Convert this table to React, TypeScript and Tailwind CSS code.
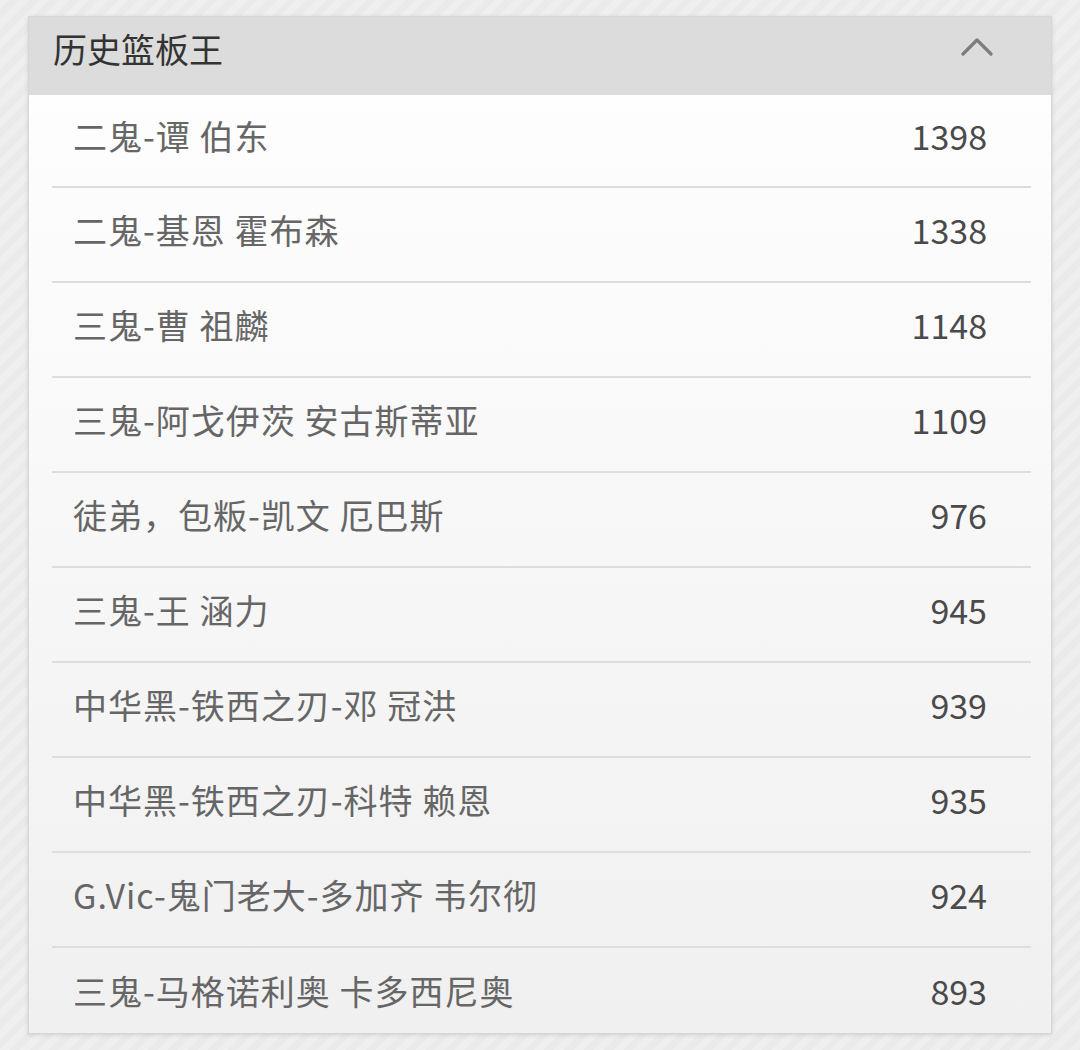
const rows = [
  { name: '二鬼-谭 伯东', value: 1398 },
  { name: '二鬼-基恩 霍布森', value: 1338 },
  { name: '三鬼-曹 祖麟', value: 1148 },
  { name: '三鬼-阿戈伊茨 安古斯蒂亚', value: 1109 },
  { name: '徒弟，包粄-凯文 厄巴斯', value: 976 },
  { name: '三鬼-王 涵力', value: 945 },
  { name: '中华黑-铁西之刃-邓 冠洪', value: 939 },
  { name: '中华黑-铁西之刃-科特 赖恩', value: 935 },
  { name: 'G.Vic-鬼门老大-多加齐 韦尔彻', value: 924 },
  { name: '三鬼-马格诺利奥 卡多西尼奥', value: 893 },
]

export default function App() {
  return (
    <div
      className="min-h-screen w-[1080px] h-[1050px] overflow-hidden pt-[16px] pl-[28px] bg-[#ededed] bg-[repeating-linear-gradient(135deg,#efefef_0px,#efefef_7px,#eaeaea_7px,#eaeaea_14px)]"
      style={{ fontFamily: '"Noto Sans CJK SC", "Noto Sans", sans-serif' }}
    >
      <div className="w-[1024px] h-[1018px] border border-[#d6d6d6] shadow-[0_1px_4px_rgba(0,0,0,0.12)] bg-gradient-to-b from-white to-[#f0f0f0] flex flex-col">
        {/* Header */}
        <div className="h-[78px] shrink-0 bg-[#dcdcdc] flex items-center justify-between pl-[24px] pr-[58px]">
          <span className="text-[34px] leading-none text-[#333333] pb-[14px]">历史篮板王</span>
          <svg width="32" height="20" viewBox="0 0 32 20" fill="none" className="mt-[-18px]">
            <path d="M2 17 L16 3 L30 17" stroke="#7d7d7d" strokeWidth="3.2" strokeLinecap="round" strokeLinejoin="round" />
          </svg>
        </div>

        {/* Rows */}
        <div className="pl-[23px] pr-[20px] flex flex-col">
          {rows.map((row, i) => (
            <div
              key={row.name}
              className={`flex items-center justify-between pl-[21px] pr-[44px] ${
                i === 0 ? 'h-[93px]' : 'h-[95px]'
              } ${i < rows.length - 1 ? 'border-b-2 border-[#dddddd]' : ''}`}
            >
              <span className="text-[34px] leading-none text-[#666666] tracking-[1px] pb-[10px]">{row.name}</span>
              <span className="text-[34px] leading-none text-[#4a4a4a] pb-[10px]">{row.value}</span>
            </div>
          ))}
        </div>
      </div>
    </div>
  )
}
